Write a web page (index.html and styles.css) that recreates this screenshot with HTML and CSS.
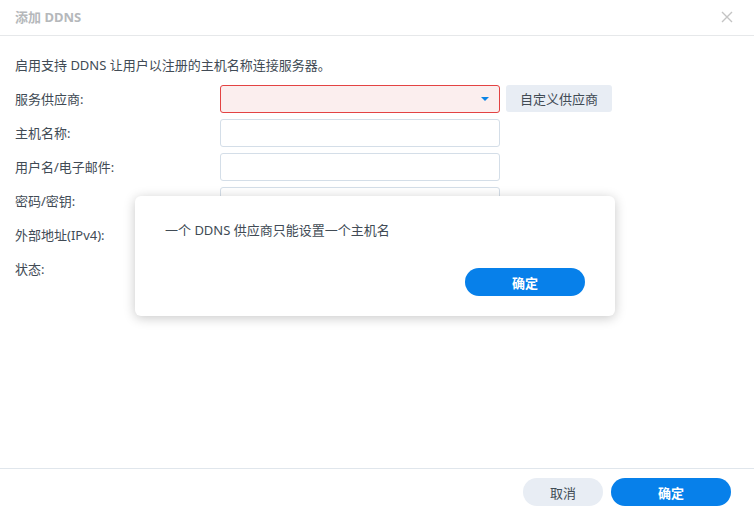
FILE: index.html
```html
<!DOCTYPE html>
<html lang="zh-CN">
<head>
<meta charset="utf-8">
<title>添加 DDNS</title>
<link rel="stylesheet" href="styles.css">
</head>
<body>
<div class="window">
  <header class="header">
    <span class="title">添加 DDNS</span>
    <span class="close">
      <svg width="12" height="12" viewBox="0 0 12 12"><path d="M1 1L11 11M11 1L1 11" stroke="#c4c4c4" stroke-width="1.4" fill="none"/></svg>
    </span>
  </header>
  <main class="content">
    <p class="desc">启用支持 DDNS 让用户以注册的主机名称连接服务器。</p>
    <div class="form">
      <label class="label">服务供应商:</label>
      <div class="select error"><span class="caret"></span></div>
      <button class="btn-gray">自定义供应商</button>

      <label class="label">主机名称:</label>
      <div class="input"></div>
      <span></span>

      <label class="label">用户名/电子邮件:</label>
      <div class="input"></div>
      <span></span>

      <label class="label">密码/密钥:</label>
      <div class="input"></div>
      <span></span>

      <label class="label">外部地址(IPv4):</label>
      <div></div>
      <span></span>

      <label class="label">状态:</label>
      <div></div>
      <span></span>
    </div>

    <div class="modal">
      <p class="modal-text">一个 DDNS 供应商只能设置一个主机名</p>
      <div class="modal-actions">
        <button class="btn-blue wide">确定</button>
      </div>
    </div>
  </main>
  <footer class="footer">
    <button class="btn-gray pill">取消</button>
    <button class="btn-blue wide">确定</button>
  </footer>
</div>
</body>
</html>
```
FILE: styles.css
```css
* { box-sizing: border-box; }
html, body { margin: 0; padding: 0; background: #fff; }
body {
  font-family: "Noto Sans", "Noto Sans CJK SC", sans-serif;
  font-size: 13px;
  color: #414b55;
}
.window {
  width: 754px;
  height: 515px;
  display: flex;
  flex-direction: column;
}
.header {
  height: 36px;
  flex: none;
  border-bottom: 1px solid #e6e8ea;
  display: flex;
  align-items: center;
  justify-content: space-between;
  padding: 0 21px 2px 15px;
}
.title {
  color: #b5b8bb;
  font-weight: bold;
  font-size: 13px;
}
.close { display: flex; }
.content {
  flex: 1;
  position: relative;
  padding: 20px 15px 0 15px;
}
.desc {
  margin: 0 0 11px 0;
  line-height: 18px;
}
.form {
  display: grid;
  grid-template-columns: 199px 280px 106px;
  grid-auto-rows: 28px;
  column-gap: 6px;
  row-gap: 6px;
  align-items: center;
}
.label { line-height: 28px; }
.input, .select {
  height: 28px;
  border: 1px solid #d4dee8;
  border-radius: 3px;
  background: #fff;
}
.select.error {
  border-color: #e34343;
  background: #fbeeee;
  position: relative;
}
.caret {
  position: absolute;
  right: 10px;
  top: 11px;
  width: 0; height: 0;
  border-left: 4px solid transparent;
  border-right: 4px solid transparent;
  border-top: 4px solid #0a84e6;
}
button {
  font-family: inherit;
  font-size: 13px;
  border: none;
  cursor: pointer;
}
.btn-gray {
  height: 27px;
  background: #e8edf4;
  color: #414b55;
  border-radius: 3px;
  padding: 0;
  align-self: start;
}
.btn-gray.pill {
  width: 80px;
  height: 28px;
  border-radius: 14px;
}
.btn-blue {
  height: 28px;
  background: #0780ea;
  color: #fff;
  font-weight: bold;
  border-radius: 14px;
}
.wide { width: 120px; }
.modal {
  position: absolute;
  left: 135px;
  top: 160px;
  width: 480px;
  height: 120px;
  background: #fff;
  border-radius: 6px;
  box-shadow: 0 2px 12px rgba(0, 0, 0, 0.22);
  padding: 25px 30px 20px 30px;
  display: flex;
  flex-direction: column;
  justify-content: space-between;
}
.modal-text {
  margin: 0;
  line-height: 18px;
}
.modal-actions {
  display: flex;
  justify-content: flex-end;
}
.footer {
  flex: none;
  height: 47px;
  border-top: 1px solid #e0e6ec;
  display: flex;
  justify-content: flex-end;
  align-items: flex-start;
  gap: 8px;
  padding: 9px 23px 0 0;
}
```
